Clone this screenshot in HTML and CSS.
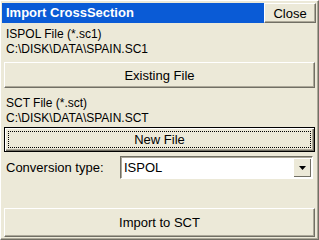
FILE: index.html
```html
<!DOCTYPE html>
<html lang="en">

<head>
    <meta charset="UTF-8">
    <title>Import CrossSection</title>
    <link rel="stylesheet" href="styles.css">
</head>

<body>
    <div class="window">
        <div class="titlebar">
            <span class="title">Import CrossSection</span>
            <button type="button" class="close">Close</button>
        </div>

        <div class="content">
            <div class="label">ISPOL File (*.sc1)</div>
            <div class="label">C:\DISK\DATA\SPAIN.SC1</div>
            <button type="button" class="button existing">Existing File</button>

            <div class="label">SCT File (*.sct)</div>
            <div class="label">C:\DISK\DATA\SPAIN.SCT</div>
            <button type="button" class="button focused"><span class="focus-ring">New File</span></button>

            <div class="row">
                <span class="row-label">Conversion type:</span>
                <div class="select">
                    <span class="select-value">ISPOL</span>
                    <span class="select-arrow">
                        <svg width="7" height="4" viewBox="0 0 7 4"><path d="M0 0H7L3.5 4Z" fill="#000"/></svg>
                    </span>
                </div>
            </div>

            <div class="spacer"></div>
            <button type="button" class="button last">Import to SCT</button>
        </div>
    </div>
</body>

</html>
```

FILE: styles.css
```css
html,
body {
    margin: 0;
    padding: 0;
}

body {
    width: 319px;
    height: 240px;
    background-color: #ece9d8;
    font-family: "Liberation Sans", Arial, sans-serif;
    font-size: 12px;
    color: #000;
    overflow: hidden;
}

.window {
    box-sizing: border-box;
    width: 319px;
    height: 240px;
    display: flex;
    flex-direction: column;
    border-left: 1px solid #fff;
    border-top: 1px solid #fff;
    border-right: 1px solid #716f64;
    border-bottom: 1px solid #716f64;
    box-shadow: inset -1px -1px 0 #aca899;
    padding: 2px 2px 2px 1px;
}

.titlebar {
    display: flex;
    align-items: stretch;
    height: 20px;
    background-color: #0a5bd6;
}

.title {
    flex: 1;
    color: #fff;
    font-weight: bold;
    font-size: 13px;
    line-height: 20px;
    padding-left: 4px;
}

.close {
    width: 52px;
    margin: 0;
    padding: 0;
    font-family: inherit;
    font-size: 13px;
    background-color: #ece9d8;
    border: 1px solid;
    border-color: #fff #716f64 #716f64 #fff;
    box-shadow: inset -1px -1px 0 #aca899;
}

.content {
    flex: 1;
    display: flex;
    flex-direction: column;
    padding: 4px 1px 0 2px;
}

.label {
    line-height: 15px;
    padding-left: 2px;
}

.button {
    height: 26px;
    margin: 4px 0 4px;
    padding: 0;
    font-family: inherit;
    font-size: 13px;
    color: #000;
    background-color: #ece9d8;
    border: 1px solid;
    border-color: #fff #716f64 #716f64 #fff;
    box-shadow: inset -1px -1px 0 #aca899;
}

.existing {
    margin: 5px 0 8px;
}

.focused {
    height: 25px;
    margin: 1px 0 3px;
    border: 1px solid #000;
    box-shadow: inset 1px 1px 0 #fff, inset -1px -1px 0 #716f64, inset -2px -2px 0 #aca899;
    padding: 3px;
}

.focus-ring {
    display: flex;
    align-items: center;
    justify-content: center;
    height: 100%;
    box-sizing: border-box;
    border: 1px dotted #000;
}

.last {
    height: 29px;
    margin: 0;
}

.row {
    display: flex;
    align-items: center;
    height: 24px;
}

.row-label {
    width: 114px;
    padding-left: 2px;
    font-size: 13px;
}

.select {
    flex: 1;
    display: flex;
    height: 23px;
    box-sizing: border-box;
    background-color: #fff;
    border: 1px solid;
    border-color: #716f64 #fff #fff #716f64;
    box-shadow: inset 1px 1px 0 #aca899;
    margin-right: 2px;
    font-size: 13px;
}

.select-value {
    flex: 1;
    line-height: 21px;
    padding-left: 3px;
}

.select-arrow {
    width: 17px;
    margin: 1px;
    display: flex;
    align-items: center;
    justify-content: center;
    background-color: #ece9d8;
    border-left: 1px solid #fff;
    border-top: 1px solid #fff;
    box-shadow: inset -1px -1px 0 #716f64;
}

.spacer {
    flex: 1;
}
```
